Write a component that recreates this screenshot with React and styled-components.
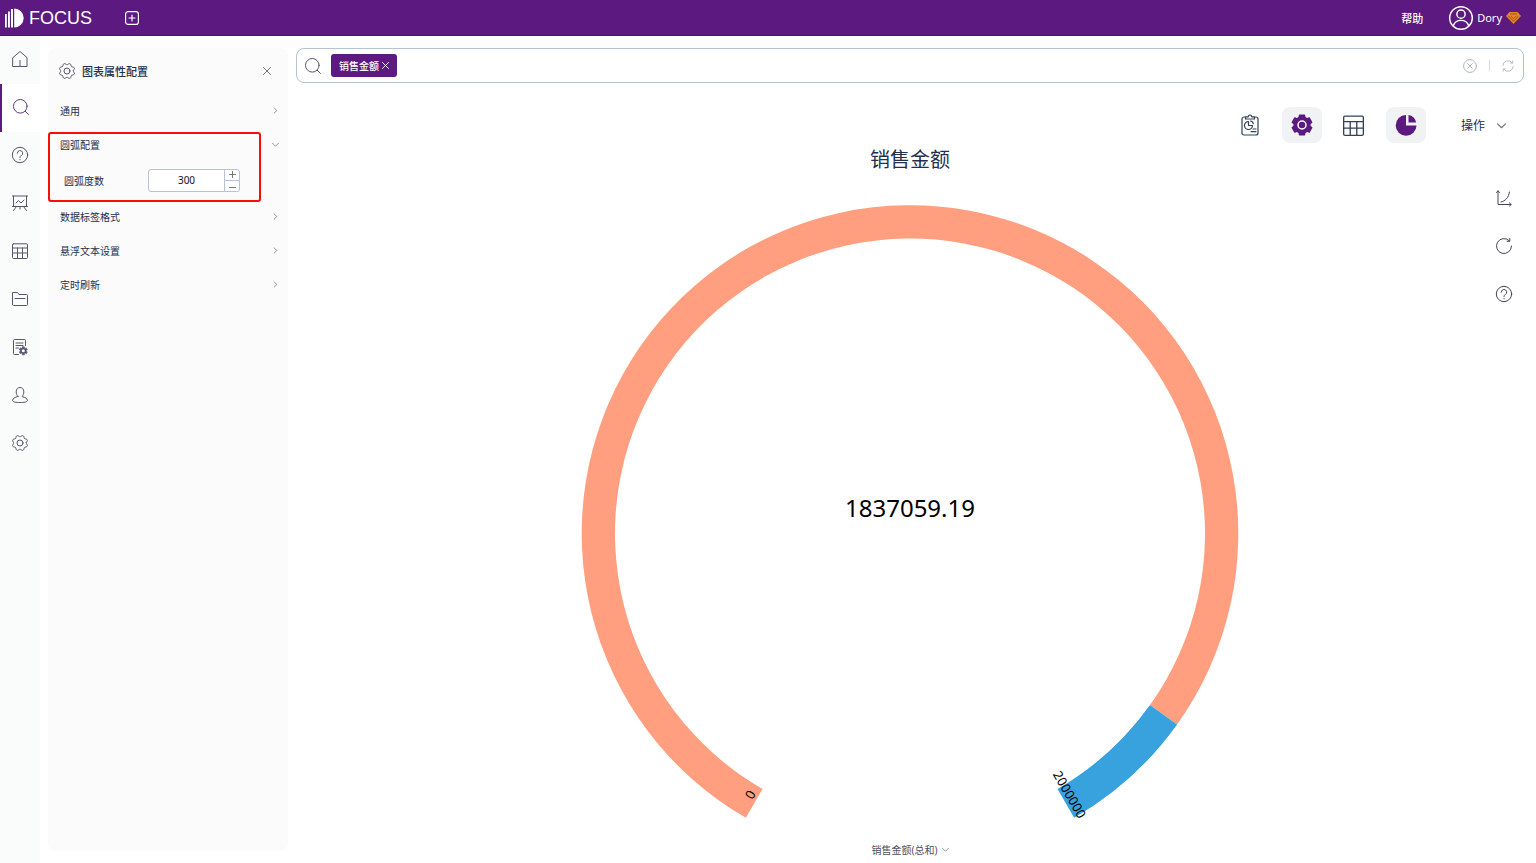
import { useState } from 'react';
import styled, { createGlobalStyle, css } from 'styled-components';

const GlobalStyle = createGlobalStyle`
  * {
    box-sizing: border-box;
  }

  body {
    margin: 0;
    background: #fff;
    color: #22304f;
    font-family: 'Noto Sans', 'Noto Sans CJK SC', sans-serif;
    font-size: 10px;
  }

  button,
  input {
    margin: 0;
    padding: 0;
    border: 0;
    background: none;
    color: inherit;
    font: inherit;
  }

  button {
    cursor: pointer;
  }
`;

const StyledPage = styled.div`
  display: flex;
  flex-direction: column;
  height: 100vh;
  min-height: 600px;
`;

const StyledHeader = styled.header`
  display: flex;
  flex: none;
  align-items: center;
  height: 36px;
  padding: 0 15px 0 5px;
  background: #5c197f;
  border-bottom: 1px solid #4b1070;
  color: #fff;
`;

const StyledBrand = styled.a`
  display: flex;
  align-items: center;
  gap: 5px;
  color: inherit;
  font-family: 'Liberation Sans', Arial, sans-serif;
  font-size: 18px;
  line-height: 20px;
  text-decoration: none;
`;

const StyledIconButton = styled.button`
  display: flex;
  align-items: center;
  justify-content: center;
  color: ${({ $color }) => $color || 'inherit'};
`;

const StyledAddButton = styled(StyledIconButton)`
  margin-left: 33px;
`;

const StyledAccount = styled.div`
  display: flex;
  align-items: center;
  gap: 26px;
  margin-left: auto;
  font-size: 11px;
`;

const StyledHelpLink = styled.a`
  color: inherit;
  font-weight: 500;
  text-decoration: none;
`;

const StyledUser = styled.button`
  display: flex;
  align-items: center;
  gap: 4px;
`;

const StyledBody = styled.div`
  display: flex;
  flex: 1;
  gap: 8px;
  min-height: 0;
  padding-right: 12px;
`;

const StyledSidebar = styled.nav`
  display: flex;
  flex: none;
  flex-direction: column;
  width: 40px;
  background: #fafbfb;
`;

const StyledNavLink = styled.a`
  display: flex;
  align-items: center;
  justify-content: center;
  height: 48px;
  padding-bottom: 2px;
  color: #55566b;

  ${({ $active }) =>
    $active &&
    css`
      background: #fff;
      border-left: 2px solid #5c197f;
      color: #5b3d78;
    `}
`;

const StyledPanel = styled.aside`
  flex: none;
  width: 240px;
  margin: 12px 0;
  background: #fbfbfb;
  border-radius: 8px;
`;

const StyledPanelHeader = styled.div`
  display: flex;
  align-items: center;
  gap: 7px;
  height: 45px;
  padding: 0 17px 0 11px;
`;

const StyledPanelTitle = styled.h2`
  flex: 1;
  margin: 0;
  font-size: 11px;
  font-weight: 500;
`;

const StyledSection = styled.section`
  position: relative;
`;

const StyledSectionToggle = styled.button`
  display: flex;
  align-items: center;
  justify-content: space-between;
  width: 100%;
  height: 34px;
  padding: 0 9px 0 12px;
`;

const StyledHighlight = styled.div`
  position: absolute;
  top: 5px;
  left: 0;
  width: 213px;
  height: 70px;
  border: 2px solid #fb0d07;
  border-radius: 3px;
  pointer-events: none;
`;

const StyledField = styled.div`
  display: flex;
  align-items: center;
  height: 38px;
  padding-left: 16px;
`;

const StyledLabel = styled.label`
  width: 84px;
`;

const StyledStepper = styled.div`
  display: flex;
  width: 92px;
  height: 23px;
  background: #fff;
  border: 1px solid #b7c2d3;
  border-radius: 3px;
`;

const StyledStepperInput = styled.input`
  flex: 1;
  min-width: 0;
  color: #111;
  font-size: 10px;
  text-align: center;
  outline: none;
`;

const StyledStepperButtons = styled.div`
  display: grid;
  grid-template-rows: 1fr 1fr;
  width: 15px;
  border-left: 1px solid #b7c2d3;
  color: #777;
`;

const StyledStepperButton = styled(StyledIconButton)`
  & + & {
    border-top: 1px solid #b7c2d3;
  }
`;

const StyledMain = styled.main`
  display: flex;
  flex: 1;
  flex-direction: column;
  min-width: 0;
  padding-top: 12px;
`;

const StyledSearchBar = styled.div`
  display: flex;
  flex: none;
  align-items: center;
  gap: 10px;
  height: 35px;
  padding: 0 9px 0 8px;
  border: 1px solid #b7c2d0;
  border-radius: 8px;
`;

const StyledTag = styled.span`
  display: flex;
  align-items: center;
  gap: 3px;
  height: 23px;
  padding: 0 8px;
  background: #5c197f;
  border-radius: 3px;
  color: #fff;
  font-weight: 500;
`;

const StyledSearchInput = styled.input`
  flex: 1;
  min-width: 0;
  outline: none;
`;

const StyledSearchActions = styled.div`
  display: flex;
  align-items: center;
  gap: 12px;
`;

const StyledDivider = styled.span`
  width: 1px;
  height: 11px;
  background: #d6dae2;
`;

const StyledToolbar = styled.div`
  display: flex;
  flex: none;
  justify-content: flex-end;
  gap: 12px;
  height: 60px;
  padding-top: 24px;
`;

const StyledTool = styled(StyledIconButton)`
  width: 40px;
  height: 36px;
  border-radius: 8px;
  background: ${({ $active }) => ($active ? '#f1f2f4' : 'transparent')};
  color: ${({ $active }) => ($active ? '#5c197f' : '#33405c')};
`;

const StyledActions = styled.button`
  display: flex;
  align-items: center;
  gap: 12px;
  padding: 0 18px 0 23px;
  font-size: 12px;
`;

const StyledStage = styled.div`
  display: grid;
  flex: 1;
  grid-template-columns: 40px 1fr 40px;
  grid-template-rows: 100%;
  min-height: 0;
`;

const StyledFigure = styled.figure`
  display: flex;
  flex-direction: column;
  grid-column: 2;
  align-items: center;
  min-height: 0;
  margin: 0;
`;

const StyledChartTitle = styled.figcaption`
  flex: none;
  font-size: 20px;
  line-height: 34px;
`;

const StyledChart = styled.svg`
  flex: 1;
  width: 100%;
  min-height: 0;
  fill: #000;
`;

const StyledLegend = styled.button`
  display: flex;
  flex: none;
  align-items: center;
  gap: 4px;
  height: 27px;
  color: #50515c;
`;

const StyledSideTools = styled.div`
  display: flex;
  flex-direction: column;
  align-items: center;
  gap: 32px;
  padding-top: 47px;
  color: #44455c;
`;

const StyledSvg = styled.svg`
  display: block;
  flex: none;
  overflow: visible;
  fill: none;
  stroke: currentColor;
  stroke-linecap: round;
  stroke-linejoin: round;
`;

const Icon = ({ size = 16, box = 16, weight = 1, children }) => (
  <StyledSvg
    width={size}
    height={size}
    viewBox={`0 0 ${box} ${box}`}
    strokeWidth={weight}
    aria-hidden='true'
  >
    {children}
  </StyledSvg>
);

const polar = (cx, cy, r, degrees) => {
  const a = (degrees * Math.PI) / 180;
  return [cx + r * Math.cos(a), cy + r * Math.sin(a)];
};

const wavyGear = Array.from({ length: 72 }, (_, i) => {
  const wave = Math.cos(((i * 5 + 22.5) * 8 * Math.PI) / 180);
  const [x, y] = polar(8, 8, 7.1 + 0.8 * wave, i * 5);
  return `${x.toFixed(2)},${y.toFixed(2)}`;
}).join(' ');

const toothGear = (c, outer, inner, teeth) => {
  const step = 360 / teeth;
  return Array.from({ length: teeth }, (_, i) => {
    const mid = i * step - 90;
    return [
      polar(c, c, inner, mid - step * 0.34),
      polar(c, c, outer, mid - step * 0.24),
      polar(c, c, outer, mid + step * 0.24),
      polar(c, c, inner, mid + step * 0.34),
    ];
  })
    .flat()
    .map(([x, y]) => `${x.toFixed(2)},${y.toFixed(2)}`)
    .join(' ');
};

const HomeIcon = () => (
  <Icon>
    <path d='M1 6.5 8 .5l7 6v9H1zM8 9.5v6' />
  </Icon>
);

const SearchIcon = () => (
  <Icon>
    <circle cx='7.3' cy='7.3' r='6.8' />
    <path d='m12.3 12.3 3.2 3.2' />
  </Icon>
);

const QuestionIcon = () => (
  <Icon>
    <circle cx='8' cy='8' r='7.7' />
    <path d='M5.3 6.2a2.700 2.700 0 1 1 4 2.400C8.300 9.200 8 9.600 8 10.500M8 12.500v.3' />
  </Icon>
);

const BoardIcon = () => (
  <Icon>
    <path d='M.5 1h15M1.500 1v10.500h13V1M.5 11.500h15M4 8l2.500-2.500L9 8l3-3M4.500 11.500l-3 4M11.500 11.500l3 4M8 11.500v2.500' />
  </Icon>
);

const TableIcon = ({ size }) => (
  <Icon size={size}>
    <rect x='.5' y='.8' width='15' height='14.700' rx='1' />
    <path d='M.5 5h15M.5 10h15M5.500 5v10.500M10.500 5v10.500' />
  </Icon>
);

const FolderIcon = () => (
  <Icon>
    <path d='M.5 13.500v-12h5l1.500 2h7.500a1 1 0 0 1 1 1v9a1 1 0 0 1-1 1h-13a1 1 0 0 1-1-1zM3 7.500h10' />
  </Icon>
);

const TaskIcon = () => (
  <Icon>
    <path d='M6.500 15.500h-4a1 1 0 0 1-1-1v-13a1 1 0 0 1 1-1h10a1 1 0 0 1 1 1v5M4 4h7M4 6.500h7M4 9h2.500' />
    <polygon points={toothGear(8, 7, 5, 6)} transform='translate(6.500 7) scale(.6)' fill='currentColor' />
    <circle cx='11.300' cy='11.800' r='1.500' fill='#fff' stroke='none' />
  </Icon>
);

const PersonIcon = () => (
  <Icon>
    <path d='M6 9.500C4.800 8.300 4.200 6.700 4.200 4.800 4.200 2 5.800.500 8 .500s3.800 1.500 3.800 4.300c0 1.900-.6 3.500-1.800 4.700.2.500 5.500.8 5.500 4 0 1.500-3.500 2-7.500 2s-7.500-.5-7.500-2c0-3.200 5.300-3.500 5.500-4z' />
  </Icon>
);

const GearIcon = () => (
  <Icon>
    <polygon points={wavyGear} />
    <circle cx='8' cy='8' r='3' />
  </Icon>
);

const SolidGearIcon = () => (
  <Icon size={22} box={22} weight={1.5}>
    <polygon points={toothGear(11, 10, 8, 6)} fill='currentColor' />
    <circle cx='11' cy='11' r='4' stroke='#fff' />
  </Icon>
);

const PieIcon = () => (
  <Icon size={22} box={22}>
    <g fill='currentColor' stroke='none'>
      <path d='M11 1v10.500H21.500A10.400 10.400 0 1 1 11 1z' />
      <path d='M13.500 1A8.300 8.300 0 0 1 21 8.500H13.500z' />
    </g>
  </Icon>
);

const ClipboardIcon = () => (
  <Icon size={22} box={22} weight={1.2}>
    <rect x='3' y='3' width='16' height='18' rx='2' />
    <path d='M6.500 5V3H9c.3-1.300 1-2 2-2s1.700.700 2 2h2.500v2z' fill='#fff' />
    <path d='M9.500 7.500a4 4 0 1 0 4 4h-4zM11.500 7a3 3 0 0 1 2.700 2.700M14 15h3M12 17.700h5' />
  </Icon>
);

const CloseIcon = ({ size = 8 }) => (
  <Icon size={size} box={8}>
    <path d='m.5.5 7 7M7.500.5l-7 7' />
  </Icon>
);

const ClearIcon = () => (
  <Icon size={14} box={14}>
    <circle cx='7' cy='7' r='6.400' />
    <path d='m4.700 4.700 4.600 4.600M9.300 4.700 4.700 9.300' />
  </Icon>
);

const SyncIcon = () => (
  <Icon size={12} box={12}>
    <path d='M.800 5.500A5.200 5.200 0 0 1 10.300 3M11.200 6.500A5.200 5.200 0 0 1 1.700 9M10.800.800V3H8.500M1.200 11.200V9h2.300' />
  </Icon>
);

const ChevronIcon = ({ down, size = 6 }) => (
  <Icon size={size} box={8}>
    <path d={down ? 'm.500 2.500 3.500 3.500L7.500 2.500' : 'M2.500 1 5.500 4 2.500 7'} />
  </Icon>
);

const AxisIcon = () => (
  <Icon>
    <path d='M2 1v13.500h13M.500 2.500 2 .800l1.500 1.700M13.500 13l1.700 1.500-1.700 1.500M5 12c4-.8 7.500-4 8.500-10' />
  </Icon>
);

const RefreshIcon = () => (
  <Icon>
    <path d='M13.300 2.700A7.500 7.500 0 1 0 15.500 8M13.800.500v2.800H11' />
  </Icon>
);

const navItems = [
  { name: '首页', icon: <HomeIcon /> },
  { name: '搜索', icon: <SearchIcon />, active: true },
  { name: '问答', icon: <QuestionIcon /> },
  { name: '看板', icon: <BoardIcon /> },
  { name: '数据表', icon: <TableIcon /> },
  { name: '资源', icon: <FolderIcon /> },
  { name: '任务', icon: <TaskIcon /> },
  { name: '用户', icon: <PersonIcon /> },
  { name: '设置', icon: <GearIcon /> },
];

const Header = () => (
  <StyledHeader>
    <StyledBrand href='#home'>
      <svg width='19' height='20' viewBox='0 0 19 20' fill='#fff' aria-hidden='true'>
        <path d='M0 6h1.800v13.500H0zM3 3.500h1.900v16H3zM6 1h2v18.500H6zM9.200.5A9.500 9.500 0 0 1 9.200 19.500z' />
      </svg>
      FOCUS
    </StyledBrand>
    <StyledAddButton type='button' aria-label='新建'>
      <Icon size={14} box={14} weight={1.2}>
        <rect x='.6' y='.6' width='12.800' height='12.800' rx='2.500' />
        <path d='M7 4v6M4 7h6' />
      </Icon>
    </StyledAddButton>
    <StyledAccount>
      <StyledHelpLink href='#help'>帮助</StyledHelpLink>
      <StyledUser type='button'>
        <Icon size={24} box={25} weight={1.5}>
          <circle cx='12.500' cy='12.500' r='11.800' />
          <circle cx='12.500' cy='8.500' r='4.300' />
          <path d='M4.500 20.500c1.300-4 4.300-5.500 8-5.500s6.700 1.500 8 5.500' />
        </Icon>
        Dory
        <Icon size={15} box={15} weight={0.7}>
          <path d='M3.500 2h8L15 6 7.500 14 0 6z' fill='#e8871e' stroke='none' />
          <path d='M2.500 6 7.500 11.300 12.500 6M4.500 4h6M5 6.300l2.500 2.200L10 6.300' stroke='#7d3a3c' />
        </Icon>
      </StyledUser>
    </StyledAccount>
  </StyledHeader>
);

const Section = ({ title, open, children }) => (
  <StyledSection>
    <StyledSectionToggle type='button' aria-expanded={Boolean(open)}>
      {title}
      <StyledIconButton as='span' $color='#85869a'>
        <ChevronIcon down={open} size={7} />
      </StyledIconButton>
    </StyledSectionToggle>
    {children}
  </StyledSection>
);

const ConfigPanel = ({ degrees, onChange }) => (
  <StyledPanel>
    <StyledPanelHeader>
      <StyledIconButton as='span' $color='#55566b'>
        <GearIcon />
      </StyledIconButton>
      <StyledPanelTitle>图表属性配置</StyledPanelTitle>
      <StyledIconButton type='button' aria-label='关闭' $color='#777'>
        <CloseIcon />
      </StyledIconButton>
    </StyledPanelHeader>
    <Section title='通用' />
    <Section title='圆弧配置' open>
      <StyledField>
        <StyledLabel htmlFor='arc-degrees'>圆弧度数</StyledLabel>
        <StyledStepper>
          <StyledStepperInput
            id='arc-degrees'
            inputMode='numeric'
            value={degrees}
            onChange={(e) => onChange(Number(e.target.value) || 0)}
          />
          <StyledStepperButtons>
            <StyledStepperButton type='button' aria-label='增加' onClick={() => onChange(degrees + 1)}>
              <Icon size={7} box={7}>
                <path d='M3.500.500v6M.500 3.500h6' />
              </Icon>
            </StyledStepperButton>
            <StyledStepperButton type='button' aria-label='减少' onClick={() => onChange(degrees - 1)}>
              <Icon size={7} box={7}>
                <path d='M.500 5.500h6' />
              </Icon>
            </StyledStepperButton>
          </StyledStepperButtons>
        </StyledStepper>
      </StyledField>
      <StyledHighlight />
    </Section>
    <Section title='数据标签格式' />
    <Section title='悬浮文本设置' />
    <Section title='定时刷新' />
  </StyledPanel>
);

const CX = 330;
const CY = 356.5;
const OUTER = 328.3;
const INNER = 295;

// angles are clockwise, 0 is three o'clock
const ringPath = (from, to) => {
  const large = to - from > 180 ? 1 : 0;
  const [a, b, c, d] = [
    polar(CX, CY, OUTER, from),
    polar(CX, CY, OUTER, to),
    polar(CX, CY, INNER, to),
    polar(CX, CY, INNER, from),
  ];
  return `M${a} A${OUTER} ${OUTER} 0 ${large} 1 ${b} L${c} A${INNER} ${INNER} 0 ${large} 0 ${d}Z`;
};

const ArcChart = ({ value, max, degrees }) => {
  const start = 270 - degrees / 2;
  const end = start + degrees;
  const split = start + (degrees * value) / max;
  const [x0, y0] = polar(CX, CY, 306, start + 1.5);
  const [x1, y1] = polar(CX, CY, 306, end - 1.5);

  return (
    <StyledChart viewBox='0 0 660 659' role='img' aria-label='销售金额'>
      <path d={ringPath(start, split)} fill='#ff9f7f' />
      <path d={ringPath(split, end)} fill='#37a2de' />
      <text x={CX} y={CY - 17} fontSize='24' textAnchor='middle'>
        {value}
      </text>
      <g fontSize='13' textAnchor='middle' dominantBaseline='central'>
        <text transform={`translate(${x0} ${y0}) rotate(${start + 180})`}>0</text>
        <text transform={`translate(${x1} ${y1}) rotate(${end})`}>{max}</text>
      </g>
    </StyledChart>
  );
};

const App = () => {
  const [degrees, setDegrees] = useState(300);

  return (
    <>
      <GlobalStyle />
      <StyledPage>
        <Header />
        <StyledBody>
          <StyledSidebar>
            {navItems.map(({ name, icon, active }) => (
              <StyledNavLink key={name} href='#nav' aria-label={name} $active={active}>
                {icon}
              </StyledNavLink>
            ))}
          </StyledSidebar>
          <ConfigPanel degrees={degrees} onChange={setDegrees} />
          <StyledMain>
            <StyledSearchBar>
              <StyledIconButton as='span' $color='#55566b'>
                <SearchIcon />
              </StyledIconButton>
              <StyledTag>
                销售金额
                <StyledIconButton type='button' aria-label='移除'>
                  <CloseIcon size={7} />
                </StyledIconButton>
              </StyledTag>
              <StyledSearchInput aria-label='搜索' />
              <StyledSearchActions>
                <StyledIconButton type='button' aria-label='清空' $color='#aeb6c2'>
                  <ClearIcon />
                </StyledIconButton>
                <StyledDivider />
                <StyledIconButton type='button' aria-label='刷新' $color='#b8bfca'>
                  <SyncIcon />
                </StyledIconButton>
              </StyledSearchActions>
            </StyledSearchBar>
            <StyledToolbar>
              <StyledTool type='button' aria-label='报告'>
                <ClipboardIcon />
              </StyledTool>
              <StyledTool type='button' aria-label='图表配置' $active>
                <SolidGearIcon />
              </StyledTool>
              <StyledTool type='button' aria-label='表格'>
                <TableIcon size={21} />
              </StyledTool>
              <StyledTool type='button' aria-label='图表' $active>
                <PieIcon />
              </StyledTool>
              <StyledActions type='button'>
                操作
                <StyledIconButton as='span' $color='#6d7080'>
                  <ChevronIcon down size={9} />
                </StyledIconButton>
              </StyledActions>
            </StyledToolbar>
            <StyledStage>
              <StyledFigure>
                <StyledChartTitle>销售金额</StyledChartTitle>
                <ArcChart value={1837059.19} max={2000000} degrees={degrees} />
                <StyledLegend type='button'>
                  销售金额(总和)
                  <StyledIconButton as='span' $color='#85869a'>
                    <ChevronIcon down size={7} />
                  </StyledIconButton>
                </StyledLegend>
              </StyledFigure>
              <StyledSideTools>
                <StyledIconButton type='button' aria-label='坐标轴'>
                  <AxisIcon />
                </StyledIconButton>
                <StyledIconButton type='button' aria-label='重置'>
                  <RefreshIcon />
                </StyledIconButton>
                <StyledIconButton type='button' aria-label='帮助'>
                  <QuestionIcon />
                </StyledIconButton>
              </StyledSideTools>
            </StyledStage>
          </StyledMain>
        </StyledBody>
      </StyledPage>
    </>
  );
};

export default App;
